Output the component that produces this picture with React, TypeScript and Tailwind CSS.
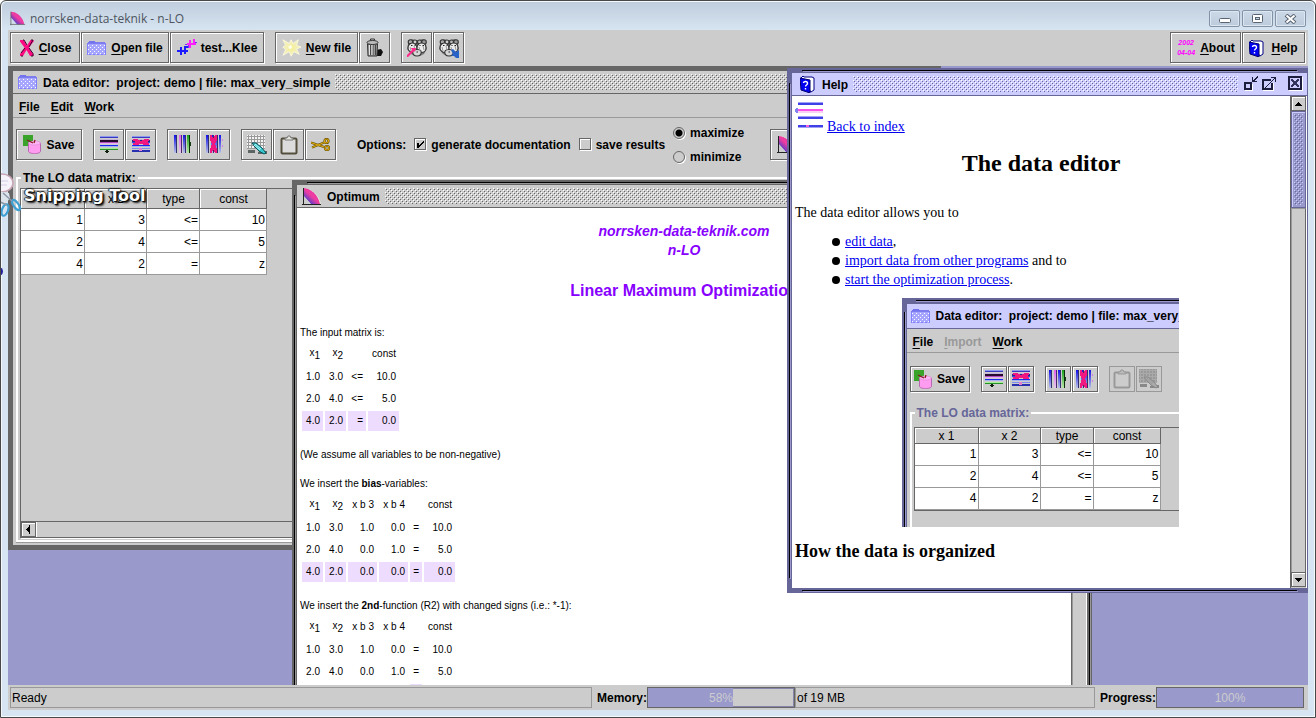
import React from "react";

type Kids = { children?: React.ReactNode };

const BUMPS_GREY =
  "h-4 min-w-0 flex-1 bg-[conic-gradient(at_1px_1px,transparent_75%,#fff_0),conic-gradient(at_1px_1px,transparent_75%,#fff_0),conic-gradient(at_1px_1px,transparent_75%,#666_0),conic-gradient(at_1px_1px,transparent_75%,#666_0)] bg-[length:4px_4px] [background-position:0_0,2px_2px,1px_1px,3px_3px]";
const BUMPS_BLUE =
  "h-4 min-w-0 flex-1 bg-[conic-gradient(at_1px_1px,transparent_75%,#fff_0),conic-gradient(at_1px_1px,transparent_75%,#fff_0),conic-gradient(at_1px_1px,transparent_75%,#669_0),conic-gradient(at_1px_1px,transparent_75%,#669_0)] bg-[length:4px_4px] [background-position:0_0,2px_2px,1px_1px,3px_3px]";

/* ---------- icons ---------- */

function FolderIcon() {
  return (
    <svg width="20" height="16" viewBox="0 0 20 16" shapeRendering="crispEdges" aria-hidden="true">
      <defs>
        <pattern id="folderDots" width="4" height="4" patternUnits="userSpaceOnUse">
          <rect width="4" height="4" fill="#a6a6ff" />
          <rect x="1" y="1" width="1" height="1" fill="#fff" />
          <rect x="3" y="3" width="1" height="1" fill="#fff" />
        </pattern>
      </defs>
      <path d="M1 4V2h1V1h6v1h1v2z" fill="#7474f0" />
      <rect x="0" y="4" width="19" height="11" fill="url(#folderDots)" />
      <path d="M0 3h19v1H0zM9 2h9v1H9z" fill="#7d7df0" />
      <path d="M0 4h1v11H0zM18 4h1v11h-1zM2 14h2v1H2zM6 14h2v1H6zM10 14h2v1h-2zM14 14h2v1h-2z" fill="#8080ff" />
    </svg>
  );
}

function CurveIcon() {
  return (
    <svg width="20" height="19" viewBox="0 0 20 19" aria-hidden="true">
      <defs>
        <linearGradient id="curveFill" x1="0" y1="1" x2="1" y2="0">
          <stop offset="0.200" stopColor="#4b3ccc" />
          <stop offset="0.500" stopColor="#f03ca0" />
          <stop offset="0.700" stopColor="#e83ca8" />
          <stop offset="1" stopColor="#6a44cc" />
        </linearGradient>
      </defs>
      <path d="M2 1C10 1 18 9 19 18L8 17L2 9z" fill="#e3f3da" />
      <path d="M1 1C8 1 16 7 18 17H9L1 8z" fill="url(#curveFill)" />
      <path d="M1 1v17M0 17h19" stroke="#222" fill="none" shapeRendering="crispEdges" />
    </svg>
  );
}

function CrossIcon() {
  return (
    <svg width="16" height="18" viewBox="0 0 16 18" aria-hidden="true">
      <path d="M1 1h3.500L8 6.500 11.500 1H14l1 1-5 6.500 4.500 7V17H11L7.500 11 4 17H1v-2l4.500-6.500L1 2.500z" fill="#ff0a82" />
      <path d="M4 1h1l3 5M12 1h2l-4 7M6 9l-4 5M10 9l4 5.500V17h-2M4 17H2" stroke="#3c0a30" strokeWidth="1" fill="none" />
    </svg>
  );
}

function CloverIcon() {
  return (
    <svg width="20" height="17" viewBox="0 0 20 17" shapeRendering="crispEdges" aria-hidden="true">
      <path d="M0 11h11v2H0zM3 8h2v8H3zM7 7h2v8H7zM9 7h2v2H9z" fill="#1c1cff" />
      <path d="M8 5h3v1H8zM11 6h1v3h-1zM18 3h2v1h-2z" fill="#7a30f0" />
      <path d="M10 4h9v2h-9zM12 1h2v8h-2zM16 0h2v6h-2z" fill="#ff20ff" />
    </svg>
  );
}

function BurstIcon() {
  return (
    <svg width="20" height="20" viewBox="0 0 22 20" aria-hidden="true">
      <path d="M1 1l7 4 2-4 2 4 6-4-2 6 5 2-5 2 3 6-6-3-3 5-2-5-7 4 3-6-3-3 3-2z" fill="#f3efb4" stroke="#fbf8dc" />
      <circle cx="10" cy="10" r="4" fill="#f5f0a0" />
      <circle cx="9" cy="9" r="2" fill="#fffff0" />
    </svg>
  );
}

function TrashIcon() {
  return (
    <svg width="20" height="20" viewBox="0 0 20 20" aria-hidden="true">
      <path d="M11 12l5-1 2 3-2 4h-5z" fill="#111" />
      <path d="M2.500 6h10l-0.500 12h-9z" fill="#9c9c9c" stroke="#333" />
      <path d="M5.500 7v10M8 7v10M10.500 7v10" stroke="#484848" strokeWidth="1" />
      <path d="M4.500 7v10M7 7v10" stroke="#e4e4e4" strokeWidth="1" />
      <ellipse cx="7.500" cy="4.500" rx="5.500" ry="2" fill="#bbb" stroke="#333" />
      <path d="M5.500 2.500V1h4v1.500" fill="none" stroke="#333" />
    </svg>
  );
}

function MiceIcon({ tone }: { tone: "pink" | "blue" }) {
  return (
    <svg width="22" height="20" viewBox="0 0 22 20" aria-hidden="true">
      <path d="M2 6L3 2l3-1 3 1h4l3-1 3 1 1 4 1 5-3 5-4 2h-5l-4-2-4-5z" fill="#777" />
      <g stroke="#333" strokeWidth="1.100">
        <circle cx="4.500" cy="4" r="2.300" fill="#a8a8a8" />
        <circle cx="9" cy="4" r="2" fill="#cfcfcf" />
        <circle cx="13.500" cy="4" r="2" fill="#b8b8b8" />
        <circle cx="18" cy="4" r="2.300" fill="#969696" />
        <path d="M2 10c0-4 3-5 4.500-5S11 7 11 10s-2 4.500-4 4.500S2 13 2 10z" fill="#ececec" />
        <path d="M11 10c0-3 2-5 4.500-5S20 7 20 10s-2.500 4.500-4.500 4.500S11 13 11 10z" fill="#ececec" />
        <path d="M7 13c1-2 7-2 8 0 1 3-1 5-4 5s-5-2-4-5z" fill="#d8d8d8" />
      </g>
      <path d="M4 9l1 4M8 8l1 4M13 9l1 4M17 8l1 4" stroke="#999" />
      <path d="M5 7.500h1.500M8.500 7.500h1M13.500 7.500h1M16.500 7.500h1.500M10.500 14h1.500" stroke="#222" />
      {tone === "pink" ? (
        <path d="M1 19v-2l5-5-1-2h5l-1 4-1-1-6 6z" fill="#ff2a8c" />
      ) : (
        <path d="M13 12l2-1 3 3 3-2v8h-3l-2-2-3 0 2-2z" fill="#2a62c8" />
      )}
    </svg>
  );
}

function BookIcon() {
  return (
    <svg width="15" height="18" viewBox="0 0 15 18" aria-hidden="true">
      <path d="M1 3l2-2 1 1 8 0 2 1v12l-3 2z" fill="#fff" stroke="#000080" />
      <path d="M0 3l10 2v13L1 15z" fill="#0000f0" stroke="#000070" />
      <path d="M3.500 8c0-2 4-2 4 0.500 0 1.500-2 1.500-2 3M5.500 13v1.500" stroke="#fff" strokeWidth="1.400" fill="none" />
    </svg>
  );
}

function SaveIcon() {
  return (
    <svg width="19" height="19" viewBox="0 0 19 19" aria-hidden="true">
      <rect x="0" y="0" width="10" height="11" fill="#3aa32a" />
      <path d="M5.500 8v8c0 2 3 2.500 6 2.500s6-0.500 6-2.500V8z" fill="#ff9cf0" stroke="#b868b0" />
      <ellipse cx="11.500" cy="8" rx="6" ry="2" fill="#ffb4f5" stroke="#d884d0" strokeWidth="0.600" />
      <path d="M4 5l6 3M11 8l1-3" stroke="#8a1a20" strokeWidth="1.300" fill="none" />
    </svg>
  );
}

function RowsIcon({ remove }: { remove?: boolean }) {
  return (
    <svg width="18" height="18" viewBox="0 0 18 18" shapeRendering="crispEdges" aria-hidden="true">
      <path d="M0 0h18v1H0z" fill="#8c98ee" />
      <path d="M0 1h18v1H0z" fill="#3a3ac0" />
      <path d="M0 3h18v1H0z" fill="#c4b4d8" />
      <path d="M0 4h18v2H0z" fill={remove ? "#28288c" : "#280c30"} />
      <path d="M0 6h18v1H0z" fill={remove ? "#3a4ae0" : "#b050c0"} />
      <path d="M0 7h18v1H0z" fill={remove ? "#b0b8f0" : "#e8b4f0"} />
      <path d="M0 9h18v1H0z" fill="#1828f0" />
      <path d="M0 10h18v1H0z" fill="#a4b0f0" />
      {remove ? (
        <>
          <path d="M0 12h18v1H0z" fill="#7c8cf0" />
          <path d="M0 14h18v2H0z" fill="#2830b0" />
          <path d="M1 3h4l4 2 4-2h4v2l-3 1 3 1v2h-4l-4-1-4 1H1V7l3-1-3-1z" fill="#f01880" />
          <path d="M7 12h3v3H7z" fill="#e080d0" />
        </>
      ) : (
        <>
          <path d="M0 12h18v1H0z" fill="#a4f094" />
          <path d="M0 13h18v1H0z" fill="#289028" />
          <path d="M5 15h4v1H5zM6 14h2v3H6z" fill="#0c200c" />
        </>
      )}
    </svg>
  );
}

function ColsIcon({ remove }: { remove?: boolean }) {
  return (
    <svg width="17" height="19" viewBox="0 0 17 19" shapeRendering="crispEdges" aria-hidden="true">
      <defs>
        <linearGradient id="colBlue" x1="0" y1="0" x2="0" y2="1">
          <stop offset="0" stopColor="#1010e8" />
          <stop offset="1" stopColor="#b8c0e8" />
        </linearGradient>
        <linearGradient id="colPink" x1="0" y1="0" x2="0" y2="1">
          <stop offset="0" stopColor="#e060f0" />
          <stop offset="1" stopColor="#e4c8ea" />
        </linearGradient>
        <linearGradient id="colGreen" x1="0" y1="0" x2="0" y2="1">
          <stop offset="0" stopColor="#18a018" />
          <stop offset="1" stopColor="#b8e8a8" />
        </linearGradient>
      </defs>
      <path d="M0 0h2v18H0zM9 0h2v18H9z" fill="url(#colBlue)" />
      <path d="M2 0h1v18H2zM11 0h1v18h-1z" fill="#30306c" />
      <path d="M5 0h2v18H5z" fill={remove ? "url(#colBlue)" : "url(#colPink)"} />
      <path d="M7 0h1v18H7z" fill="#48286c" />
      {remove ? (
        <>
          <path d="M13 0h2v18h-2z" fill="url(#colBlue)" />
          <path d="M4 0h2l1 4 2-4h2v5L9 9l2 5v4H9l-2-4-1 4H4v-4l2-5-2-4z" fill="#f01880" />
          <path d="M16 4h1v2h-1zM16 10h1v2h-1z" fill="#d080e0" />
        </>
      ) : (
        <>
          <path d="M13 0h2v18h-2z" fill="url(#colGreen)" />
          <path d="M15 0h1v18h-1z" fill="#0c300c" />
          <path d="M16 7h1v4h-1z" fill="#104010" />
        </>
      )}
    </svg>
  );
}

function SheetIcon({ off }: { off?: boolean }) {
  return (
    <svg width="20" height="20" viewBox="0 0 20 20" aria-hidden="true">
      <rect x="0" y="0" width="18" height="14" fill={off ? "#999" : "#f4f4f4"} />
      <path d="M0 1h18M0 4h18M0 7h18M0 10h18M0 13h18M1 0v14M4 0v14M7 0v14M10 0v14M13 0v14M16 0v14" stroke={off ? "#aaa" : "#999"} shapeRendering="crispEdges" />
      <path d="M1 15h7v3H1zM14 16h6v3h-9v-2z" fill={off ? "#888" : "#5c6464"} />
      <path d="M5 8l4 0 6 5 4 5-2 1-5-3-4-4z" fill={off ? "#aaa" : "#38c8d0"} stroke={off ? "#888" : "#0a5058"} />
      <path d="M8 9l6 5M7 10l6 5" stroke={off ? "#999" : "#d0ffff"} strokeWidth="0.800" />
    </svg>
  );
}

function ClipboardIcon({ off }: { off?: boolean }) {
  return (
    <svg width="18" height="20" viewBox="0 0 18 20" aria-hidden="true">
      <rect x="1.500" y="3.500" width="15" height="15" rx="1" fill={off ? "#ccc" : "#dcdcdc"} stroke={off ? "#999" : "#544e3c"} strokeWidth="2" />
      <path d="M5 5V3h2l1-2h2l1 2h2v2z" fill={off ? "#bbb" : "#e4e4dc"} stroke={off ? "#999" : "#777"} />
    </svg>
  );
}

function ScissorsIcon() {
  return (
    <svg width="20" height="14" viewBox="0 0 20 14" aria-hidden="true">
      <g stroke="#5c4400" strokeWidth="2.200" fill="none">
        <path d="M0 4.500l13 4.500M1 9.500l12-5" />
        <circle cx="15.500" cy="3" r="2" />
        <circle cx="16" cy="10" r="2" />
      </g>
      <g stroke="#d8a810" strokeWidth="1.200" fill="none">
        <path d="M0 4.500l13 4.500M1 9.500l12-5" />
        <circle cx="15.500" cy="3" r="2" />
        <circle cx="16" cy="10" r="2" />
      </g>
    </svg>
  );
}

function IndexIcon() {
  return (
    <svg width="30" height="30" viewBox="0 0 30 30" shapeRendering="crispEdges" aria-hidden="true">
      <path d="M3 3h25v2H3zM3 17h25v2H3zM3 25h25v2H3z" fill="#4040e8" />
      <path d="M3 2h25v1H3zM3 16h25v1H3zM3 27h25v1H3z" fill="#a0a0f4" />
      <path d="M3 9h25v2H3z" fill="#f850e8" />
      <path d="M3 11h25v2H3z" fill="#fbd0f6" />
      <path d="M0 9h1v3H0zM1 8h2v5H1z" fill="#8080f0" />
      <path d="M11 25h3v2h-3z" fill="#f060e0" />
    </svg>
  );
}

function SnipIcon() {
  return (
    <svg width="24" height="48" viewBox="0 0 24 48" aria-hidden="true">
      <ellipse cx="2" cy="12" rx="11" ry="9" fill="#f6f3fb" stroke="#c9a6b4" strokeWidth="1.500" />
      <path d="M0 10h8M0 14h7" stroke="#d6cfe4" />
      <path d="M0 21l9 1 1 5-5 7-5-2z" fill="#dde3ea" />
      <g fill="none" stroke="#3fa0d4" strokeWidth="2.200">
        <ellipse cx="16" cy="34" rx="2.500" ry="6" transform="rotate(-35 16 34)" />
        <ellipse cx="5" cy="39" rx="3" ry="6" transform="rotate(20 5 39)" />
      </g>
      <path d="M3 22l9 8M0 31l7 3" stroke="#8a98a8" strokeWidth="1.500" />
    </svg>
  );
}

/* ---------- building blocks ---------- */

const BUTTON_SIZES = { normal: "h-[31px]", compact: "h-[26px]" };

function MetalButton({
  children,
  className = "px-[6px]",
  label,
  size = "normal",
  off,
}: Kids & { className?: string; label?: string; size?: "normal" | "compact"; off?: boolean }) {
  return (
    <button
      type="button"
      aria-label={label}
      disabled={off}
      className={`flex shrink-0 items-center justify-center gap-1 border bg-[#ccc] font-bold whitespace-nowrap ${
        off ? "border-[#999]" : "border-[#666] shadow-[inset_1px_1px_#fff,1px_1px_#fff]"
      } ${BUTTON_SIZES[size]} ${className}`}
    >
      {children}
    </button>
  );
}

function FrameLines({ tone }: { tone: "grey" | "blue" }) {
  const light = tone === "grey" ? "shadow-[1px_1px_#999]" : "shadow-[1px_1px_#9999cc]";
  return (
    <>
      <span className={`absolute -top-[3px] right-[10px] left-[10px] h-px bg-black ${light}`} />
      <span className={`absolute right-[10px] -bottom-[3px] left-[10px] h-px bg-black ${light}`} />
      <span className={`absolute top-[10px] bottom-[10px] -left-[3px] w-px bg-black ${light}`} />
      <span className={`absolute top-[10px] -right-[3px] bottom-[10px] w-px bg-black ${light}`} />
    </>
  );
}

function FrameTitle({ icon, children, blue, tools }: Kids & { icon: React.ReactNode; blue?: boolean; tools?: React.ReactNode }) {
  return (
    <header
      className={`flex h-[23px] shrink-0 items-center gap-[5px] border-b pl-[5px] font-bold ${
        blue ? "border-[#666699] bg-[#ccccff]" : "border-[#666] bg-[#ccc]"
      }`}
    >
      <span className="flex w-5 shrink-0 justify-center">{icon}</span>
      <h2 className="pt-[2px] leading-[14px] whitespace-pre">{children}</h2>
      <span className={blue ? BUMPS_BLUE : BUMPS_GREY} />
      {tools}
    </header>
  );
}

function MenuBar({ items }: { items: { text: string; off?: boolean }[] }) {
  return (
    <nav className="flex h-6 shrink-0 items-center gap-[11px] border-b border-[#999] pt-[2px] pl-[6px] font-bold">
      {items.map((m) => (
        <button key={m.text} type="button" disabled={m.off} className={m.off ? "text-[#999]" : "text-black"}>
          <Mnemonic text={m.text} />
        </button>
      ))}
    </nav>
  );
}

function Mnemonic({ text }: { text: string }) {
  return (
    <span>
      <span className="underline underline-offset-2">{text[0]}</span>
      {text.slice(1)}
    </span>
  );
}

const MATRIX = [
  ["1", "3", "<=", "10"],
  ["2", "4", "<=", "5"],
  ["4", "2", "=", "z"],
];

function DataMatrix({ compact }: { compact?: boolean }) {
  return (
    <table className="w-[246px] table-fixed border-separate border-spacing-0">
      <colgroup>
        <col className="w-[64px]" />
        <col className="w-[62px]" />
        <col className="w-[53px]" />
        <col className="w-[67px]" />
      </colgroup>
      <thead>
        <tr>
          {["x 1", "x 2", "type", "const"].map((h) => (
            <th
              key={h}
              className={`border-r border-b border-[#666] bg-[#ccc] p-0 pl-px text-center font-normal shadow-[inset_1px_1px_#fff] ${
                compact ? "h-4 pt-px leading-[14px]" : "h-5 pt-px leading-[18px]"
              }`}
            >
              {h}
            </th>
          ))}
        </tr>
      </thead>
      <tbody>
        {MATRIX.map((row, i) => (
          <tr key={i}>
            {row.map((c, j) => (
              <td
                key={j}
                className={`h-[22px] border-r border-b border-[#999] bg-white p-0 pr-px text-right leading-[20px] ${compact ? "pb-px" : ""}`}
              >
                {c}
              </td>
            ))}
          </tr>
        ))}
      </tbody>
    </table>
  );
}

function ArrowButton({ dir }: { dir: "up" | "down" | "left" }) {
  const d = dir === "up" ? "M4 0h1v1h1v1h1v1h1v1H1V3h1V2h1V1h1z" : dir === "down" ? "M1 0h7v1H7v1H6v1H5v1H4V3H3V2H2V1H1z" : "M4 0v9H3V7H2V6H1V5H0V4h1V3h1V2h1V0z";
  return (
    <button type="button" aria-label={`Scroll ${dir}`} className="flex size-[15px] shrink-0 items-center justify-center border border-[#666] bg-[#ccc] shadow-[inset_1px_1px_#fff]">
      <svg width={dir === "left" ? 5 : 9} height={dir === "left" ? 9 : 4} shapeRendering="crispEdges" aria-hidden="true">
        <path d={d} />
      </svg>
    </button>
  );
}

function Check({ label, on }: { label: string; on?: boolean }) {
  return (
    <label className="flex shrink-0 items-center gap-1 whitespace-nowrap">
      <span className="grid size-[13px]">
        <input type="checkbox" defaultChecked={on} className="peer col-start-1 row-start-1 size-3 appearance-none border border-[#666] shadow-[inset_1px_1px_#fff,1px_1px_#fff]" />
        <svg className="pointer-events-none invisible col-start-1 row-start-1 peer-checked:visible" width="13" height="13" shapeRendering="crispEdges" aria-hidden="true">
          <path d="M3 5h2v2h1V6h1V5h1V4h1V3h1v2H9v1H8v1H7v1H6v1H5v1H3z" />
        </svg>
      </span>
      {label}
    </label>
  );
}

function Radio({ label, on }: { label: string; on?: boolean }) {
  return (
    <label className="flex h-6 items-center gap-[5px]">
      <input
        type="radio"
        name="goal"
        defaultChecked={on}
        className="size-3 appearance-none rounded-full border border-[#666] shadow-[1px_1px_#fff] checked:bg-[radial-gradient(circle,#000_3px,transparent_4px)]"
      />
      {label}
    </label>
  );
}

function Sub({ n }: { n: number }) {
  return (
    <span className="inline-flex">
      x<span className="pt-[3px]">{n}</span>
    </span>
  );
}

type ResultProps = { heads: React.ReactNode[]; widths: string[]; rows: string[][]; shade?: number[] };

function ResultTable({ heads, widths, rows, shade }: ResultProps) {
  return (
    <table className="mt-px ml-[3px] table-fixed border-separate border-spacing-[2px] text-right">
      <thead>
        <tr>
          {heads.map((h, i) => (
            <th key={i} className={`h-[22px] p-0 pr-[3px] font-normal whitespace-nowrap ${widths[i]}`}>
              {h}
            </th>
          ))}
        </tr>
      </thead>
      <tbody>
        {rows.map((r, i) => (
          <tr key={i}>
            {r.map((c, j) => (
              <td key={j} className={`h-5 p-0 pr-[3px] ${i === 2 && (!shade || shade.includes(j)) ? "bg-[#eedcff]" : ""}`}>
                {c}
              </td>
            ))}
          </tr>
        ))}
      </tbody>
    </table>
  );
}

const BIAS_HEADS = [<Sub n={1} />, <Sub n={2} />, "x b 3", "x b 4", "", "const"];
const BIAS_WIDTHS = ["w-[21px]", "w-[21px]", "w-[29px]", "w-[29px]", "w-[12px]", "w-[31px]"];
const BIAS_ROWS = [
  ["1.0", "3.0", "1.0", "0.0", "=", "10.0"],
  ["2.0", "4.0", "0.0", "1.0", "=", "5.0"],
  ["4.0", "2.0", "0.0", "0.0", "=", "0.0"],
];

/* ---------- windows ---------- */

function DataEditor() {
  return (
    <section className="absolute top-0 left-0 flex h-[484px] w-[933px] flex-col border-[5px] border-[#666] bg-[#ccc]">
      <FrameTitle icon={<FolderIcon />}>{"Data editor:  project: demo | file: max_very_simple"}</FrameTitle>
      <MenuBar items={[{ text: "File" }, { text: "Edit" }, { text: "Work" }]} />
      <div className="flex h-[53px] shrink-0 items-center pl-[3px] font-bold">
        <MetalButton className="mr-[11px] w-[66px]">
          <SaveIcon />
          Save
        </MetalButton>
        <div className="mr-[11px] flex gap-px">
          <MetalButton className="w-[31px]" label="Insert row"><RowsIcon /></MetalButton>
          <MetalButton className="w-[31px]" label="Delete row"><RowsIcon remove /></MetalButton>
        </div>
        <div className="mr-[11px] flex gap-px">
          <MetalButton className="w-[31px]" label="Insert column"><ColsIcon /></MetalButton>
          <MetalButton className="w-[31px]" label="Delete column"><ColsIcon remove /></MetalButton>
        </div>
        <div className="mr-[21px] flex gap-px">
          <MetalButton className="w-[31px]" label="Edit sheet"><SheetIcon /></MetalButton>
          <MetalButton className="w-[31px]" label="Paste"><ClipboardIcon /></MetalButton>
          <MetalButton className="w-[31px]" label="Cut"><ScissorsIcon /></MetalButton>
        </div>
        <div className="flex items-center gap-2">
          <span>Options:</span>
          <Check label="generate documentation" on />
          <Check label="save results" />
          <div>
            <Radio label="maximize" on />
            <Radio label="minimize" />
          </div>
        </div>
        <MetalButton className="ml-[26px] px-[6px]" label="Optimize"><CurveIcon /></MetalButton>
      </div>
      <fieldset className="mr-[3px] mb-[3px] ml-[3px] flex min-h-0 flex-1 flex-col border-2 border-white px-[2px] pt-[3px] pb-[2px] shadow-[0_1px_#999]">
        <legend className="ml-px px-[2px] leading-[14px] font-bold">The LO data matrix:</legend>
        <div className="flex min-h-0 flex-1 flex-col border border-[#666] shadow-[1px_1px_#fff]">
          <div className="min-h-0 flex-1 overflow-hidden">
            <DataMatrix />
          </div>
          <div className="flex h-4 shrink-0 border-t border-[#666]">
            <ArrowButton dir="left" />
            <span className="flex-1 border-l border-white" />
          </div>
        </div>
      </fieldset>
    </section>
  );
}

function OptimumWindow() {
  return (
    <section className="absolute top-[114px] left-[284px] h-[620px] w-[800px] border-[5px] border-[#666] bg-white">
      <FrameLines tone="grey" />
      <div className="flex h-full flex-col">
        <FrameTitle icon={<CurveIcon />}>Optimum</FrameTitle>
        <div className="flex min-h-0 flex-1">
          <article className="min-w-0 flex-1 overflow-hidden pt-[14px] text-[10px] leading-[14px]">
            <div className="text-center font-bold text-[#8800ff]">
              <p className="text-[14px] leading-[19px] italic">
                norrsken-data-teknik.com
                <br />
                n-LO
              </p>
              <h1 className="mt-5 text-[16px] leading-[22px]">Linear Maximum Optimization</h1>
            </div>
            <p className="mt-6 pl-[3px]">The input matrix is:</p>
            <ResultTable
              heads={[<Sub n={1} />, <Sub n={2} />, "", "const"]}
              widths={["w-[21px]", "w-[21px]", "w-[18px]", "w-[31px]"]}
              rows={[
                ["1.0", "3.0", "<=", "10.0"],
                ["2.0", "4.0", "<=", "5.0"],
                ["4.0", "2.0", "=", "0.0"],
              ]}
            />
            <p className="mt-[15px] pl-[3px]">(We assume all variables to be non-negative)</p>
            <p className="mt-[15px] pl-[3px]">
              We insert the <b>bias</b>-variables:
            </p>
            <ResultTable heads={BIAS_HEADS} widths={BIAS_WIDTHS} rows={BIAS_ROWS} />
            <p className="mt-[15px] pl-[3px]">
              We insert the <b>2nd</b>-function (R2) with changed signs (i.e.: *-1):
            </p>
            <ResultTable heads={BIAS_HEADS} widths={BIAS_WIDTHS} rows={BIAS_ROWS} shade={[4]} />
          </article>
          <div className="flex w-4 shrink-0 flex-col border-x border-[#666] border-r-white bg-[#ccc] pb-[30px]">
            <ArrowButton dir="up" />
            <span className="flex-1 border-b border-l border-[#999]" />
            <ArrowButton dir="down" />
          </div>
        </div>
      </div>
    </section>
  );
}

function EditorPreview() {
  return (
    <figure className="mx-auto flex h-[229px] w-[277px] flex-col overflow-hidden bg-[#666699]">
      <div className="ml-[14px] h-[6px] shrink-0 pt-[2px]">
        <span className="block h-px bg-black shadow-[0_1px_#9999cc]" />
      </div>
      <div className="flex min-h-0 flex-1">
        <span className="mt-2 ml-[2px] w-px shrink-0 bg-black shadow-[1px_0_#9999cc]" />
        <div className="ml-[2px] flex w-[400px] shrink-0 flex-col bg-[#ccc] font-['Liberation_Sans',Arial,sans-serif] text-[12px] leading-[14px]">
          <div className="flex h-[25px] shrink-0 items-center gap-[5px] border-b border-[#666699] bg-[#ccccff] pb-px pl-1 font-bold whitespace-pre">
            <FolderIcon />
            {"Data editor:  project: demo | file: max_very_simple"}
          </div>
          <MenuBar items={[{ text: "File" }, { text: "Import", off: true }, { text: "Work" }]} />
          <div className="flex h-[53px] shrink-0 items-center pb-px pl-[3px]">
            <MetalButton size="compact" className="mr-[11px] w-[60px]">
              <SaveIcon />
              Save
            </MetalButton>
            <div className="mr-[11px] flex gap-px">
              <MetalButton size="compact" className="w-[26px]" label="Insert row"><RowsIcon /></MetalButton>
              <MetalButton size="compact" className="w-[26px]" label="Delete row"><RowsIcon remove /></MetalButton>
            </div>
            <div className="mr-[11px] flex gap-px">
              <MetalButton size="compact" className="w-[26px]" label="Insert column"><ColsIcon /></MetalButton>
              <MetalButton size="compact" className="w-[26px]" label="Delete column"><ColsIcon remove /></MetalButton>
            </div>
            <div className="flex gap-px">
              <MetalButton size="compact" off className="w-[26px]" label="Paste"><ClipboardIcon off /></MetalButton>
              <MetalButton size="compact" off className="w-[26px]" label="Edit sheet"><SheetIcon off /></MetalButton>
            </div>
          </div>
          <fieldset className="ml-[3px] h-[200px] shrink-0 border-2 border-white px-[2px] pt-[7px]">
            <legend className="ml-px px-[2px] font-bold text-[#666699]">The LO data matrix:</legend>
            <div className="h-full border border-[#666]">
              <DataMatrix compact />
            </div>
          </fieldset>
        </div>
      </div>
    </figure>
  );
}

function HelpWindow() {
  const link = "text-[#0000ee] underline";
  return (
    <section className="absolute top-[2px] left-[779px] h-[525px] w-[525px] border-[5px] border-[#666699] bg-white">
      <FrameLines tone="blue" />
      <div className="flex h-full flex-col">
        <FrameTitle
          blue
          icon={<BookIcon />}
          tools={
            <span className="flex shrink-0 items-center">
              <button type="button" aria-label="Iconify" className="mr-[2px]">
                <svg width="16" height="16" shapeRendering="crispEdges" aria-hidden="true">
                  <path d="M2 14h7V8h1v7H2z" fill="#fff" />
                  <path d="M1 6h8v8H1zM3 8v4h4V8z" fillRule="evenodd" fill="#1c1c3c" />
                  <path d="M9 1h1v3h1V3h1V2h1V1h1V0h1v2h-1v1h-1v1h-1v1h2v1H9z" fill="#1c1c3c" />
                </svg>
              </button>
              <button type="button" aria-label="Maximize" className="mr-[10px]">
                <svg width="17" height="16" shapeRendering="crispEdges" aria-hidden="true">
                  <path d="M2 14h10V7h1v8H2z" fill="#fff" />
                  <path d="M1 3h9v2H3v7h7V7h2v7H1z" fill="#1c1c3c" />
                  <path d="M10 1h5v5h-1V3h-1v1h-1v1h-1v1h-1v1H9v1H8v1H7v1H6v1H5v1H4v-1h1v-1h1V9h1V8h1V7h1V6h1V5h1V4h1V3h1V2h-3z" fill="#1c1c3c" />
                </svg>
              </button>
              <button type="button" aria-label="Close help" className="mr-[3px]">
                <svg width="16" height="16" shapeRendering="crispEdges" aria-hidden="true">
                  <path d="M1 1h14v14H1z" fill="#fff" />
                  <path d="M0 0h14v14H0z" fill="#1c1c3c" />
                  <path d="M2 2h10v10H2z" fill="#ccccff" />
                  <path d="M3 3h2v1h1v1h2V4h1V3h2v2h-1v1H9v2h1v1h1v2H9v-1H8V9H6v1H5v1H3V9h1V8h1V6H4V5H3z" fill="#33335c" />
                </svg>
              </button>
            </span>
          }
        >
          Help
        </FrameTitle>
        <div className="flex min-h-0 flex-1">
          <article className="min-w-0 flex-1 overflow-hidden px-[3px] pt-1 font-['Liberation_Serif',serif] text-[14px] leading-[19px]">
            <div className="flex items-end gap-[2px]">
              <IndexIcon />
              <a href="#index" className={`-mb-[6px] ${link}`}>
                Back to index
              </a>
            </div>
            <h1 className="mt-[19px] text-center text-[24px] leading-[28px] font-bold">The data editor</h1>
            <p className="mt-[26px]">The data editor allows you to</p>
            <ul className="mt-[10px] pl-[37px]">
              {[
                ["edit data", ","],
                ["import data from other programs", " and to"],
                ["start the optimization process", "."],
              ].map(([text, tail]) => (
                <li key={text} className="flex items-center gap-[5px]">
                  <span className="size-2 rounded-full bg-black" />
                  <span>
                    <a href="#help" className={link}>
                      {text}
                    </a>
                    {tail}
                  </span>
                </li>
              ))}
            </ul>
            <div className="pt-[9px] pr-[2px]">
              <EditorPreview />
            </div>
            <h2 className="mt-[14px] text-[18px] leading-[20px] font-bold">How the data is organized</h2>
          </article>
          <div className="mr-[1px] flex w-4 shrink-0 flex-col border-l border-[#666] bg-[#ccc] pb-px">
            <ArrowButton dir="up" />
            <span className="flex h-[97px] w-[15px] shrink-0 border border-[#666699] bg-[#9999cc] p-[2px] shadow-[inset_1px_1px_#ccccff]">
              <span className="flex-1 bg-[conic-gradient(at_1px_1px,transparent_75%,#ccf_0),conic-gradient(at_1px_1px,transparent_75%,#ccf_0),conic-gradient(at_1px_1px,transparent_75%,#669_0),conic-gradient(at_1px_1px,transparent_75%,#669_0)] [background-position:0_0,2px_2px,1px_1px,3px_3px] bg-[length:4px_4px]" />
            </span>
            <span className="flex-1 border-x border-t border-[#999] border-r-[#666]" />
            <ArrowButton dir="down" />
          </div>
        </div>
      </div>
    </section>
  );
}

/* ---------- shell ---------- */

function CaptionButton({ label, children }: Kids & { label: string }) {
  return (
    <button
      type="button"
      aria-label={label}
      className="flex h-[17px] w-[31px] items-center justify-center rounded-[2px] border border-[#8293a8] bg-linear-to-b from-[#ccd9e7] to-[#bccbdc] shadow-[inset_0_0_0_1px_#dde7f1]"
    >
      {children}
    </button>
  );
}

function Meter({ name, value, text }: { name: string; value: number; text: string }) {
  return (
    <div className="flex items-center">
      <span className="font-bold">{name}:</span>
      <div
        role="progressbar"
        aria-label={name}
        aria-valuenow={value}
        className="grid h-[21px] w-[148px] items-center border border-[#666] shadow-[inset_0_0_0_1px_#8585a8]"
      >
        <span className="col-start-1 row-start-1 h-full bg-[#9999cc]" style={{ width: `${value}%` }} />
        <span className="col-start-1 row-start-1 text-center text-[#ccc]">{text}</span>
      </div>
    </div>
  );
}

export default function App() {
  return (
    <div className="relative flex h-screen flex-col overflow-hidden rounded-t-[6px] border border-[#484848] bg-[#d7e4f1] px-[7px] pb-[7px] font-['Liberation_Sans',Arial,sans-serif] text-[12px] leading-[14px] text-black shadow-[inset_0_0_0_1px_#f4f9fd]">
      <header className="-mx-[6px] mt-px flex h-7 shrink-0 items-center rounded-t-[5px] bg-linear-to-b from-[#bfcddd] to-[#d7e4f1] pr-2 pl-2">
        <span className="mt-[5px] flex w-full items-center gap-1">
          <svg width="16" height="15" viewBox="0 0 20 19" aria-hidden="true">
            <path d="M1 1C8 1 16 7 18 17H9L1 8z" fill="url(#curveFill)" />
            <path d="M1 1v17M0 17h19" stroke="#666" fill="none" />
          </svg>
          <h1 className="flex-1 font-['Open_Sans','Noto_Sans',sans-serif] text-[12px] text-[#4c5560]">norrsken-data-teknik - n-LO</h1>
          <span className="flex gap-[2px]">
            <CaptionButton label="Minimize">
              <svg width="12" height="6" aria-hidden="true" className="mt-1">
                <rect x="0.500" y="0.500" width="11" height="4" rx="1" fill="#fff" stroke="#596473" />
              </svg>
            </CaptionButton>
            <CaptionButton label="Restore">
              <svg width="12" height="10" aria-hidden="true">
                <rect x="0.500" y="0.500" width="10" height="8" rx="1" fill="#fff" stroke="#596473" />
                <rect x="3.500" y="3.500" width="4" height="2" fill="#c4d2e1" stroke="#596473" />
              </svg>
            </CaptionButton>
            <CaptionButton label="Close window">
              <svg width="13" height="10" aria-hidden="true">
                <path d="M2 1l9 8M11 1L2 9" stroke="#596473" strokeWidth="4" />
                <path d="M2.500 1.500l8 7M10.500 1.500l-8 7" stroke="#fff" strokeWidth="2" />
              </svg>
            </CaptionButton>
          </span>
        </span>
      </header>

      <div className="flex h-9 shrink-0 items-center bg-[#ccc] px-[2px] pb-px">
        <div className="flex gap-px">
          <MetalButton className="w-[70px]"><CrossIcon /><Mnemonic text="Close" /></MetalButton>
          <MetalButton className="w-[88px]"><FolderIcon /><Mnemonic text="Open file" /></MetalButton>
          <MetalButton className="w-[94px]"><CloverIcon />test...Klee</MetalButton>
        </div>
        <div className="ml-[11px] flex gap-px">
          <MetalButton className="w-[83px]"><BurstIcon /><Mnemonic text="New file" /></MetalButton>
          <MetalButton className="w-[31px]" label="Delete file"><TrashIcon /></MetalButton>
        </div>
        <div className="ml-[11px] flex gap-px">
          <MetalButton className="w-[31px]" label="Send"><MiceIcon tone="pink" /></MetalButton>
          <MetalButton className="w-[31px]" label="Receive"><MiceIcon tone="blue" /></MetalButton>
        </div>
        <div className="ml-auto flex gap-px pr-px">
          <MetalButton className="w-[71px]">
            <span className="w-5 text-center text-[7px] leading-[10px] whitespace-normal text-[#ff00ff] italic">2002 04-04</span>
            <Mnemonic text="About" />
          </MetalButton>
          <MetalButton className="w-[63px]"><span className="mr-[3px]"><BookIcon /></span><Mnemonic text="Help" /></MetalButton>
        </div>
      </div>

      <main className="relative min-h-0 flex-1 overflow-hidden bg-[#9999cc]">
        <DataEditor />
        <OptimumWindow />
        <HelpWindow />
      </main>

      <footer className="flex h-[25px] shrink-0 items-center gap-[5px] bg-[#ccc] pr-1 pl-[2px]">
        <div className="flex h-[21px] flex-2 items-center border border-[#999] pl-px">Ready</div>
        <div className="flex flex-[1.720] items-center">
          <Meter name="Memory" value={58} text="58%" />
          <div className="flex h-[21px] flex-1 items-center border border-[#999] pl-px">of 19 MB</div>
        </div>
        <Meter name="Progress" value={100} text="100%" />
      </footer>

      <div className="pointer-events-none absolute top-[170px] -left-px">
        <SnipIcon />
      </div>
      <div className="pointer-events-none absolute top-[185px] left-[23px] font-['DejaVu_Sans',sans-serif] text-[16px] leading-[20px] font-bold text-white [text-shadow:1px_1px_1px_#000,-1px_0_1px_#222,0_-1px_1px_#222,2px_2px_2px_#222]">
        Snipping Tool
      </div>
      <span className="absolute top-[266px] -left-[7px] size-[9px] rounded-full bg-[#20209c]" />
    </div>
  );
}
